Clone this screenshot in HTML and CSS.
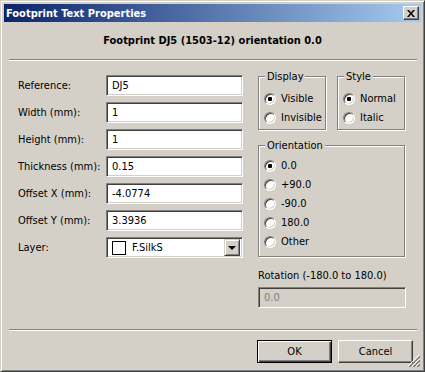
FILE: index.html
```html
<!DOCTYPE html>
<html lang="en">

<head>
  <meta charset="UTF-8">
  <title>Footprint Text Properties</title>
  <link rel="stylesheet" href="styles.css">
</head>

<body>

  <div class="window">
    <div class="titlebar">
      <span class="title">Footprint Text Properties</span>
      <button class="close" title="Close">
        <svg width="8" height="7" viewBox="0 0 8 7">
          <path d="M0 0h2l2 2.5L6 0h2L5 3.5 8 7H6L4 4.5 2 7H0l3-3.5z" fill="#000" />
        </svg>
      </button>
    </div>

    <div class="dialog">
      <p class="heading">Footprint DJ5 (1503-12) orientation 0.0</p>
      <div class="sep"></div>

      <div class="main">
        <div class="form">
          <label>Reference:</label>
          <div class="field">DJ5</div>
          <label>Width (mm):</label>
          <div class="field">1</div>
          <label>Height (mm):</label>
          <div class="field">1</div>
          <label>Thickness (mm):</label>
          <div class="field">0.15</div>
          <label>Offset X (mm):</label>
          <div class="field">-4.0774</div>
          <label>Offset Y (mm):</label>
          <div class="field">3.3936</div>
          <label>Layer:</label>
          <div class="field combo">
            <span class="swatch"></span>
            <span>F.SilkS</span>
            <span class="drop"><span class="arrow"></span></span>
          </div>
        </div>

        <div class="side">
          <div class="group-row">
            <div class="group small">
              <span class="legend">Display</span>
              <div class="radio"><span class="mark checked"></span>Visible</div>
              <div class="radio"><span class="mark"></span>Invisible</div>
            </div>
            <div class="group small">
              <span class="legend">Style</span>
              <div class="radio"><span class="mark checked"></span>Normal</div>
              <div class="radio"><span class="mark"></span>Italic</div>
            </div>
          </div>

          <div class="group orient">
            <span class="legend">Orientation</span>
            <div class="radio"><span class="mark checked"></span>0.0</div>
            <div class="radio"><span class="mark"></span>+90.0</div>
            <div class="radio"><span class="mark"></span>-90.0</div>
            <div class="radio"><span class="mark"></span>180.0</div>
            <div class="radio"><span class="mark"></span>Other</div>
          </div>

          <div class="rot-label">Rotation (-180.0 to 180.0)</div>
          <div class="field disabled">0.0</div>
        </div>
      </div>

      <div class="sep sep-bottom"></div>

      <div class="buttons">
        <button class="btn default">OK</button>
        <button class="btn">Cancel</button>
      </div>
    </div>

    <svg class="grip" width="12" height="12" viewBox="0 0 12 12">
      <path d="M11 0L0 11M11 4L4 11M11 8L8 11" stroke="#fff" />
      <path d="M12 1L1 12M12 2L2 12M12 5L5 12M12 6L6 12M12 9L9 12M12 10L10 12" stroke="#808080" />
    </svg>
  </div>

</body>

</html>
```

FILE: styles.css
```css
* {
  box-sizing: border-box;
}

body {
  margin: 0;
  font-family: "DejaVu Sans Condensed", "DejaVu Sans", sans-serif;
  font-size: 11px;
  color: #000;
}

.window {
  position: relative;
  width: 425px;
  height: 372px;
  background-color: #d4d0c8;
  border: 1px solid;
  border-color: #d4d0c8 #404040 #404040 #d4d0c8;
  box-shadow: inset 1px 1px #fff, inset -1px -1px #808080;
  padding: 3px;
  display: flex;
  flex-direction: column;
}

.titlebar {
  height: 18px;
  background: linear-gradient(to right, #0a246a, #a6caf0);
  display: flex;
  align-items: center;
  justify-content: space-between;
  padding: 0 2px;
  color: #fff;
  font-weight: bold;
}

.close {
  width: 16px;
  height: 14px;
  padding: 0;
  display: flex;
  align-items: center;
  justify-content: center;
  background-color: #d4d0c8;
  border: 1px solid;
  border-color: #fff #404040 #404040 #fff;
  box-shadow: inset -1px -1px #808080;
}

.heading {
  margin: 0;
  padding-top: 12px;
  line-height: 13px;
  text-align: center;
  font-weight: bold;
}

.sep {
  height: 2px;
  border-top: 1px solid #808080;
  border-bottom: 1px solid #fff;
  margin: 12px 4px 0 5px;
}

.sep-bottom {
  margin-top: 21px;
}

.main {
  display: flex;
  padding-left: 14px;
  margin-top: 14px;
}

.form {
  display: grid;
  grid-template-columns: 88px 137px;
  grid-auto-rows: 21px;
  row-gap: 6px;
  align-items: center;
}

.field {
  height: 21px;
  display: flex;
  align-items: center;
  padding: 0 5px;
  background-color: #fff;
  border: 1px solid;
  border-color: #808080 #fff #fff #808080;
  box-shadow: inset 1px 1px #404040, inset -1px -1px #d4d0c8;
}

.field.disabled {
  background-color: #d4d0c8;
  color: #808080;
}

.combo {
  gap: 6px;
  padding-right: 2px;
}

.swatch {
  width: 14px;
  height: 14px;
  border: 1px solid #000;
  background-color: #fff;
}

.drop {
  margin-left: auto;
  width: 16px;
  height: 17px;
  display: flex;
  align-items: center;
  justify-content: center;
  background-color: #d4d0c8;
  border: 1px solid;
  border-color: #d4d0c8 #404040 #404040 #d4d0c8;
  box-shadow: inset 1px 1px #fff, inset -1px -1px #808080;
}

.arrow {
  width: 0;
  height: 0;
  border-left: 4px solid transparent;
  border-right: 4px solid transparent;
  border-top: 4px solid #000;
}

.side {
  margin-left: 15px;
  width: 148px;
}

.group-row {
  display: flex;
  gap: 11px;
  margin-top: 1px;
}

.group {
  position: relative;
  border: 1px solid #808080;
  box-shadow: 1px 1px #fff, inset 1px 1px #fff;
}

.group.small {
  width: 68px;
  height: 54px;
  padding: 12px 0 2px 5px;
}

.group.orient {
  width: 147px;
  height: 112px;
  margin-top: 15px;
  padding: 10px 0 5px 5px;
}

.legend {
  position: absolute;
  top: -7px;
  left: 6px;
  padding: 0 2px;
  line-height: 13px;
  background-color: #d4d0c8;
}

.radio {
  height: 19px;
  display: flex;
  align-items: center;
  gap: 5px;
}

.mark {
  position: relative;
  width: 12px;
  height: 12px;
  border-radius: 50%;
  background-color: #fff;
  border: 1px solid;
  border-color: #808080 #fff #fff #808080;
  box-shadow: inset 1px 1px #404040, inset -1px -1px #d4d0c8;
}

.mark.checked::after {
  content: "";
  position: absolute;
  left: 3px;
  top: 3px;
  width: 4px;
  height: 4px;
  border-radius: 1px;
  background-color: #000;
}

.rot-label {
  margin-top: 12px;
  line-height: 13px;
  margin-bottom: 5px;
}

.buttons {
  display: flex;
  justify-content: flex-end;
  gap: 6px;
  margin-top: 9px;
  padding-right: 8px;
}

.btn {
  width: 75px;
  height: 23px;
  padding: 0;
  font-family: inherit;
  font-size: 11px;
  color: #000;
  background-color: #d4d0c8;
  border: 1px solid;
  border-color: #fff #404040 #404040 #fff;
  box-shadow: inset -1px -1px #808080, inset 1px 1px #d4d0c8;
}

.btn.default {
  border: 1px solid #000;
  box-shadow: inset 1px 1px #fff, inset -1px -1px #404040, inset -2px -2px #808080;
}

.grip {
  position: absolute;
  right: 4px;
  bottom: 4px;
}
```
